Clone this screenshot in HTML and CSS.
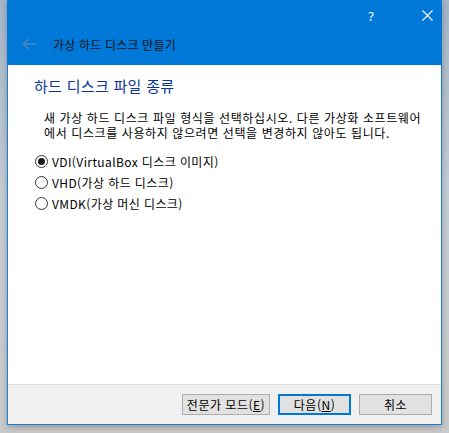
FILE: index.html
```html
<!DOCTYPE html>
<html lang="ko">
<head>
<meta charset="utf-8">
<title>가상 하드 디스크 만들기</title>
<link rel="stylesheet" href="styles.css">
</head>
<body>
<div class="window">
  <div class="titlebar">
    <div class="caption">
      <span class="help">?</span>
      <svg class="close" width="11" height="11" viewBox="0 0 11 11"><path d="M0.5 0.5 L10.5 10.5 M10.5 0.5 L0.5 10.5" stroke="#fff" stroke-width="1.1" fill="none"/></svg>
    </div>
    <div class="nav">
      <svg class="back" width="14" height="12" viewBox="0 0 14 12"><path d="M13.5 6 H1.5 M6.5 1 L1.5 6 L6.5 11" stroke="#4c88c6" stroke-width="1.6" fill="none"/></svg>
      <span class="title">가상 하드 디스크 만들기</span>
    </div>
  </div>
  <div class="content">
    <h1 class="heading">하드 디스크 파일 종류</h1>
    <p class="desc">새 가상 하드 디스크 파일 형식을 선택하십시오. 다른 가상화 소프트웨어 에서 디스크를 사용하지 않으려면 선택을 변경하지 않아도 됩니다.</p>
    <div class="options">
      <label class="opt"><span class="radio checked"></span><span>VDI(VirtualBox 디스크 이미지)</span></label>
      <label class="opt"><span class="radio"></span><span>VHD(가상 하드 디스크)</span></label>
      <label class="opt"><span class="radio"></span><span>VMDK(가상 머신 디스크)</span></label>
    </div>
  </div>
  <div class="footer">
    <button class="btn wide">전문가 모드(<u>E</u>)</button>
    <button class="btn default">다음(<u>N</u>)</button>
    <button class="btn">취소</button>
  </div>
</div>
</body>
</html>
```
FILE: styles.css
```css
html, body {
  margin: 0;
  padding: 0;
}
body {
  width: 449px;
  height: 433px;
  overflow: hidden;
  background: linear-gradient(180deg, #a3b5c8 0%, #c4ccd4 45%, #c9c9c9 100%);
  font-family: "Noto Sans CJK KR", "Noto Sans", sans-serif;
  color: #000;
}
.window {
  margin-left: 7px;
  width: 435px;
  height: 425px;
  box-sizing: border-box;
  border: 1px solid #1580d8;
  border-top: 0;
  background: #fff;
  display: flex;
  flex-direction: column;
  box-shadow: 0 2px 6px rgba(0,0,0,0.25);
}
.titlebar {
  flex: none;
  height: 65px;
  margin: 0 -1px;
  background: #0078d7;
  display: flex;
  flex-direction: column;
}
.caption {
  height: 30px;
  display: flex;
  align-items: center;
  justify-content: flex-end;
  padding-right: 9px;
}
.help {
  color: #fff;
  font-family: "Noto Sans", sans-serif;
  font-size: 13px;
  line-height: 14px;
  margin-right: 48px;
  margin-top: 1px;
}
.close {
  display: block;
  margin-top: 1px;
}
.nav {
  height: 30px;
  display: flex;
  align-items: center;
  padding-left: 15px;
}
.back {
  display: block;
  margin-top: -2px;
}
.title {
  margin-left: 17px;
  font-size: 12px;
  line-height: 16px;
  color: #111;
  letter-spacing: 0.2px;
}
.content {
  flex: 1;
  padding: 0 10px 0 26px;
}
.heading {
  margin: 11px 0 0;
  font-size: 15px;
  line-height: 20px;
  font-weight: normal;
  color: #0a3596;
  letter-spacing: 0.3px;
}
.desc {
  margin: 14px 0 0 10px;
  font-size: 12px;
  line-height: 15px;
  letter-spacing: 0.6px;
}
.options {
  margin-top: 11px;
  display: flex;
  flex-direction: column;
}
.opt {
  height: 21px;
  display: flex;
  align-items: center;
  font-size: 12px;
  padding-left: 1px;
  letter-spacing: 0.4px;
}
.radio {
  width: 13px;
  height: 13px;
  box-sizing: border-box;
  border: 1px solid #333;
  border-radius: 50%;
  margin-right: 4px;
  position: relative;
  background: #fff;
}
.radio.checked::after {
  content: "";
  position: absolute;
  inset: 2px;
  border-radius: 50%;
  background: #1a1a1a;
}
.footer {
  flex: none;
  height: 39px;
  border-top: 1px solid #dfdfdf;
  background: #f0f0f0;
  display: flex;
  align-items: center;
  justify-content: flex-end;
  gap: 8px;
  padding-right: 9px;
}
.btn {
  width: 73px;
  height: 21px;
  box-sizing: border-box;
  border: 1px solid #adadad;
  background: #e1e1e1;
  font-family: "Noto Sans CJK KR", "Noto Sans", sans-serif;
  font-size: 12px;
  line-height: 17px;
  color: #000;
  padding: 0;
  letter-spacing: 0.5px;
}
.btn.wide {
  width: 88px;
}
.btn.default {
  border: 2px solid #0078d7;
}
.btn u {
  text-decoration: underline;
  text-underline-offset: 1px;
}
```
